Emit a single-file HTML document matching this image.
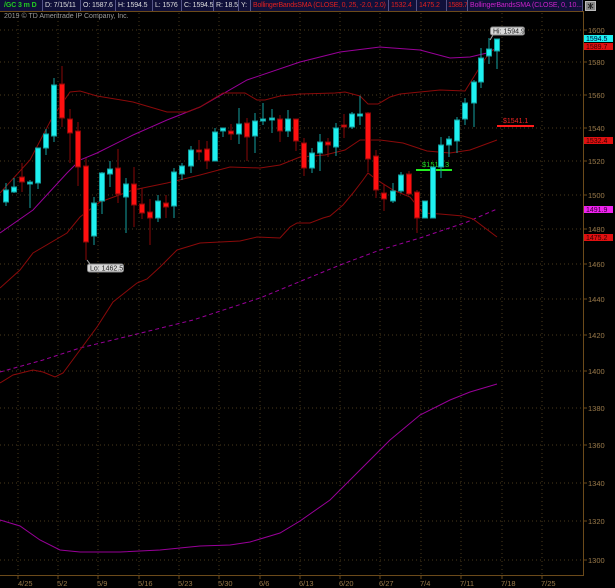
<!DOCTYPE html>
<html><head><meta charset="utf-8"><style>
html,body{margin:0;padding:0;background:#000;}
body{width:615px;height:588px;overflow:hidden;position:relative;font-family:"Liberation Sans",sans-serif;}
svg{position:absolute;left:0;top:0;}
text{font-family:"Liberation Sans",sans-serif;}
.hd{position:absolute;top:0;height:11px;font-size:7px;line-height:11px;color:#ddd;white-space:nowrap;overflow:hidden;border-right:1px solid #555588;background:#10103a;box-sizing:border-box;padding-left:2px;letter-spacing:-0.1px;}
</style></head><body>
<svg width="615" height="588" viewBox="0 0 615 588">
<g stroke="#4a3a1c" stroke-width="1" stroke-dasharray="1,3">
<line x1="0" x2="583" y1="30" y2="30"/><line x1="0" x2="583" y1="62" y2="62"/><line x1="0" x2="583" y1="95" y2="95"/><line x1="0" x2="583" y1="128" y2="128"/><line x1="0" x2="583" y1="161" y2="161"/><line x1="0" x2="583" y1="195" y2="195"/><line x1="0" x2="583" y1="229" y2="229"/><line x1="0" x2="583" y1="264" y2="264"/><line x1="0" x2="583" y1="299" y2="299"/><line x1="0" x2="583" y1="335" y2="335"/><line x1="0" x2="583" y1="371" y2="371"/><line x1="0" x2="583" y1="408" y2="408"/><line x1="0" x2="583" y1="445" y2="445"/><line x1="0" x2="583" y1="483" y2="483"/><line x1="0" x2="583" y1="521" y2="521"/><line x1="0" x2="583" y1="560" y2="560"/>
<line x1="18" x2="18" y1="13" y2="575"/><line x1="58" x2="58" y1="13" y2="575"/><line x1="98" x2="98" y1="13" y2="575"/><line x1="139" x2="139" y1="13" y2="575"/><line x1="179" x2="179" y1="13" y2="575"/><line x1="219" x2="219" y1="13" y2="575"/><line x1="260" x2="260" y1="13" y2="575"/><line x1="300" x2="300" y1="13" y2="575"/><line x1="340" x2="340" y1="13" y2="575"/><line x1="380" x2="380" y1="13" y2="575"/><line x1="421" x2="421" y1="13" y2="575"/><line x1="461" x2="461" y1="13" y2="575"/><line x1="502" x2="502" y1="13" y2="575"/><line x1="542" x2="542" y1="13" y2="575"/>
</g>
<path d="M0 11.5H583.5V575.5H0" fill="none" stroke="#6b4a1a" stroke-width="1"/>
<g stroke="#6b4a1a"><line x1="18" x2="18" y1="575" y2="579"/><line x1="58" x2="58" y1="575" y2="579"/><line x1="98" x2="98" y1="575" y2="579"/><line x1="139" x2="139" y1="575" y2="579"/><line x1="179" x2="179" y1="575" y2="579"/><line x1="219" x2="219" y1="575" y2="579"/><line x1="260" x2="260" y1="575" y2="579"/><line x1="300" x2="300" y1="575" y2="579"/><line x1="340" x2="340" y1="575" y2="579"/><line x1="380" x2="380" y1="575" y2="579"/><line x1="421" x2="421" y1="575" y2="579"/><line x1="461" x2="461" y1="575" y2="579"/><line x1="502" x2="502" y1="575" y2="579"/><line x1="542" x2="542" y1="575" y2="579"/>
<line x1="583" x2="587" y1="30" y2="30"/><line x1="583" x2="587" y1="62" y2="62"/><line x1="583" x2="587" y1="95" y2="95"/><line x1="583" x2="587" y1="128" y2="128"/><line x1="583" x2="587" y1="161" y2="161"/><line x1="583" x2="587" y1="195" y2="195"/><line x1="583" x2="587" y1="229" y2="229"/><line x1="583" x2="587" y1="264" y2="264"/><line x1="583" x2="587" y1="299" y2="299"/><line x1="583" x2="587" y1="335" y2="335"/><line x1="583" x2="587" y1="371" y2="371"/><line x1="583" x2="587" y1="408" y2="408"/><line x1="583" x2="587" y1="445" y2="445"/><line x1="583" x2="587" y1="483" y2="483"/><line x1="583" x2="587" y1="521" y2="521"/><line x1="583" x2="587" y1="560" y2="560"/></g>
<g fill="#9a7a4a" font-size="7.5">
<text x="588" y="33">1600</text><text x="588" y="65">1580</text><text x="588" y="98">1560</text><text x="588" y="131">1540</text><text x="588" y="164">1520</text><text x="588" y="198">1500</text><text x="588" y="232">1480</text><text x="588" y="267">1460</text><text x="588" y="302">1440</text><text x="588" y="338">1420</text><text x="588" y="374">1400</text><text x="588" y="411">1380</text><text x="588" y="448">1360</text><text x="588" y="486">1340</text><text x="588" y="524">1320</text><text x="588" y="563">1300</text>
<text x="18" y="586">4/25</text><text x="57" y="586">5/2</text><text x="97" y="586">5/9</text><text x="138" y="586">5/16</text><text x="178" y="586">5/23</text><text x="218" y="586">5/30</text><text x="259" y="586">6/6</text><text x="299" y="586">6/13</text><text x="339" y="586">6/20</text><text x="379" y="586">6/27</text><text x="420" y="586">7/4</text><text x="460" y="586">7/11</text><text x="501" y="586">7/18</text><text x="541" y="586">7/25</text>
</g>
<text x="4" y="18" font-size="7" fill="#9a9a9a">2019 © TD Ameritrade IP Company, Inc.</text>
<g fill="none" stroke-width="1">
<polyline stroke="#990099" points="0,233 33,210 67,173 80,160 97,153 133,135 167,120 200,107 247,80 300,62 340,52 380,47 420,50 450,58 470,57 487,53 497,48"/>
<polyline stroke="#990099" points="0,520 20,526 40,540 60,550 80,552 120,552 160,550 200,546 230,545 250,542 280,533 300,521 330,500 360,470 390,440 420,415 450,400 470,392 497,384"/>
<polyline stroke="#990099" stroke-dasharray="4,3" points="0,372 43,360 80,348 133,335 193,320 260,298 340,265 380,250 420,238 467,222 497,209"/>
<polyline stroke="#8b0a0a" points="0,193 30,160 52,118 70,92 80,91 97,96 133,102 167,112 187,112 200,107 223,93 245,93 257,100 265,100 280,96 300,94 335,93 345,92 360,96 368,104 378,104 390,97 400,94 420,92 440,90 465,91 475,75 483,62 490,52 497,48"/>
<polyline stroke="#8b0a0a" points="0,288 20,270 33,253 67,233 80,217 100,202 133,190 167,183 200,175 230,167 260,168 280,165 300,157 325,155 345,150 360,140 380,140 403,143 427,151 450,153 470,150 497,140"/>
<polyline stroke="#8b0a0a" points="0,383 13,375 33,370 43,372 55,377 63,373 80,350 97,327 113,302 137,283 147,279 160,267 177,250 200,243 240,241 257,237 280,238 290,227 297,223 310,223 323,218 330,216 343,205 353,193 363,180 368,173 377,180 393,190 410,197 423,213 440,214 463,216 473,219 497,237"/>
</g>
<line x1="497" x2="534" y1="126" y2="126" stroke="#ff1a1a" stroke-width="2"/>
<text x="503" y="123" font-size="7" fill="#ee2222">$1541.1</text>
<text x="422" y="167" font-size="7.5" fill="#22dd22">$1515.3</text>
<line x1="416" x2="452" y1="170" y2="170" stroke="#22ee22" stroke-width="2"/>
<g stroke-width="1">
<g stroke="#13a0a0" fill="#1ef0f0">
<line x1="6" x2="6" y1="183" y2="206"/><rect x="3.5" y="190" width="5" height="12"/>
<line x1="14" x2="14" y1="178" y2="193"/><rect x="11.5" y="187" width="5" height="5"/>
<line x1="30" x2="30" y1="180" y2="208"/><rect x="27.5" y="182" width="5" height="2"/>
<line x1="38" x2="38" y1="148" y2="189"/><rect x="35.5" y="148" width="5" height="35"/>
<line x1="46" x2="46" y1="129" y2="155"/><rect x="43.5" y="134" width="5" height="14"/>
<line x1="54" x2="54" y1="78" y2="142"/><rect x="51.5" y="85" width="5" height="51"/>
<line x1="94" x2="94" y1="197" y2="245"/><rect x="91.5" y="203" width="5" height="33"/>
<line x1="102" x2="102" y1="172" y2="214"/><rect x="99.5" y="173" width="5" height="28"/>
<line x1="110" x2="110" y1="161" y2="187"/><rect x="107.5" y="169" width="5" height="5"/>
<line x1="126" x2="126" y1="178" y2="233"/><rect x="123.5" y="184" width="5" height="13"/>
<line x1="158" x2="158" y1="195" y2="222"/><rect x="155.5" y="201" width="5" height="17"/>
<line x1="174" x2="174" y1="168" y2="218"/><rect x="171.5" y="172" width="5" height="34"/>
<line x1="182" x2="182" y1="163" y2="180"/><rect x="179.5" y="166" width="5" height="8"/>
<line x1="191" x2="191" y1="146" y2="173"/><rect x="188.5" y="150" width="5" height="16"/>
<line x1="215" x2="215" y1="128" y2="161"/><rect x="212.5" y="132" width="5" height="29"/>
<line x1="223" x2="223" y1="128" y2="137"/><rect x="220.5" y="128" width="5" height="3"/>
<line x1="239" x2="239" y1="108" y2="144"/><rect x="236.5" y="124" width="5" height="10"/>
<line x1="255" x2="255" y1="113" y2="153"/><rect x="252.5" y="121" width="5" height="15"/>
<line x1="263" x2="263" y1="103" y2="125"/><rect x="260.5" y="119" width="5" height="2"/>
<line x1="272" x2="272" y1="109" y2="133"/><rect x="269.5" y="118" width="5" height="2"/>
<line x1="288" x2="288" y1="110" y2="137"/><rect x="285.5" y="119" width="5" height="12"/>
<line x1="312" x2="312" y1="148" y2="173"/><rect x="309.5" y="153" width="5" height="15"/>
<line x1="320" x2="320" y1="134" y2="171"/><rect x="317.5" y="142" width="5" height="11"/>
<line x1="336" x2="336" y1="123" y2="156"/><rect x="333.5" y="128" width="5" height="19"/>
<line x1="352" x2="352" y1="112" y2="129"/><rect x="349.5" y="114" width="5" height="13"/>
<line x1="360" x2="360" y1="96" y2="125"/><rect x="357.5" y="114" width="5" height="2"/>
<line x1="393" x2="393" y1="183" y2="203"/><rect x="390.5" y="191" width="5" height="10"/>
<line x1="401" x2="401" y1="172" y2="193"/><rect x="398.5" y="175" width="5" height="16"/>
<rect x="422.5" y="201" width="5" height="17"/>
<rect x="430.5" y="167" width="5" height="51"/>
<line x1="441" x2="441" y1="137" y2="178"/><rect x="438.5" y="145" width="5" height="22"/>
<line x1="449" x2="449" y1="136" y2="157"/><rect x="446.5" y="139" width="5" height="6"/>
<line x1="457" x2="457" y1="117" y2="153"/><rect x="454.5" y="120" width="5" height="21"/>
<line x1="465" x2="465" y1="98" y2="125"/><rect x="462.5" y="103" width="5" height="16"/>
<line x1="474" x2="474" y1="80" y2="127"/><rect x="471.5" y="82" width="5" height="21"/>
<line x1="481" x2="481" y1="48" y2="88"/><rect x="478.5" y="58" width="5" height="24"/>
<line x1="489" x2="489" y1="38" y2="64"/><rect x="486.5" y="49" width="5" height="7"/>
<line x1="497" x2="497" y1="39" y2="69"/><rect x="494.5" y="39" width="5" height="12"/>
</g>
<g stroke="#8a0808" fill="#ff1010">
<line x1="22" x2="22" y1="163" y2="192"/><rect x="19.5" y="177" width="5" height="5"/>
<line x1="62" x2="62" y1="66" y2="127"/><rect x="59.5" y="84" width="5" height="34"/>
<line x1="70" x2="70" y1="109" y2="163"/><rect x="67.5" y="119" width="5" height="14"/>
<line x1="78" x2="78" y1="122" y2="186"/><rect x="75.5" y="131" width="5" height="36"/>
<line x1="86" x2="86" y1="158" y2="260"/><rect x="83.5" y="166" width="5" height="76"/>
<line x1="118" x2="118" y1="149" y2="203"/><rect x="115.5" y="168" width="5" height="26"/>
<line x1="134" x2="134" y1="167" y2="227"/><rect x="131.5" y="184" width="5" height="21"/>
<line x1="142" x2="142" y1="188" y2="219"/><rect x="139.5" y="204" width="5" height="9"/>
<line x1="150" x2="150" y1="199" y2="245"/><rect x="147.5" y="212" width="5" height="6"/>
<line x1="166" x2="166" y1="195" y2="218"/><rect x="163.5" y="203" width="5" height="4"/>
<line x1="199" x2="199" y1="140" y2="160"/><rect x="196.5" y="150" width="5" height="2"/>
<line x1="207" x2="207" y1="141" y2="169"/><rect x="204.5" y="149" width="5" height="12"/>
<line x1="231" x2="231" y1="124" y2="140"/><rect x="228.5" y="131" width="5" height="3"/>
<line x1="247" x2="247" y1="118" y2="161"/><rect x="244.5" y="123" width="5" height="14"/>
<line x1="280" x2="280" y1="115" y2="142"/><rect x="277.5" y="119" width="5" height="12"/>
<line x1="296" x2="296" y1="119" y2="151"/><rect x="293.5" y="119" width="5" height="22"/>
<line x1="304" x2="304" y1="138" y2="176"/><rect x="301.5" y="143" width="5" height="25"/>
<line x1="328" x2="328" y1="138" y2="157"/><rect x="325.5" y="142" width="5" height="3"/>
<line x1="344" x2="344" y1="114" y2="138"/><rect x="341.5" y="125" width="5" height="2"/>
<line x1="368" x2="368" y1="112" y2="172"/><rect x="365.5" y="113" width="5" height="46"/>
<line x1="376" x2="376" y1="150" y2="198"/><rect x="373.5" y="156" width="5" height="34"/>
<line x1="384" x2="384" y1="184" y2="211"/><rect x="381.5" y="193" width="5" height="6"/>
<line x1="409" x2="409" y1="171" y2="195"/><rect x="406.5" y="174" width="5" height="20"/>
<line x1="417" x2="417" y1="190" y2="233"/><rect x="414.5" y="192" width="5" height="26"/>
</g>
</g>
<line x1="87" y1="260" x2="90" y2="264" stroke="#aaa"/>
<rect x="87.5" y="264" width="36" height="8" rx="2" fill="#d8d8d8" stroke="#888"/>
<text x="90" y="270.5" font-size="7" fill="#222">Lo: 1462.5</text>
<line x1="493" y1="35" x2="490" y2="40" stroke="#aaa"/>
<rect x="490.5" y="27" width="34" height="8" rx="2" fill="#d8d8d8" stroke="#888"/>
<text x="493" y="33.5" font-size="7" fill="#222">Hi: 1594.9</text>
<rect x="584" y="35" width="29" height="7" fill="#1ef0f0"/><text x="586" y="41" font-size="7" fill="#003">1594.5</text>
<rect x="584" y="43" width="29" height="7" fill="#e01010"/><text x="586" y="49" font-size="7" fill="#300">1589.7</text>
<rect x="584" y="137" width="29" height="7" fill="#e01010"/><text x="586" y="143" font-size="7" fill="#300">1532.4</text>
<rect x="584" y="206" width="29" height="7" fill="#ee22ee"/><text x="586" y="212" font-size="7" fill="#303">1491.9</text>
<rect x="584" y="234" width="29" height="7" fill="#e01010"/><text x="586" y="240" font-size="7" fill="#300">1475.2</text>
<rect x="585.5" y="1.5" width="10" height="9" fill="#888" stroke="#bbb"/>
<path d="M588 4 L593 8 M593 4 L588 8 M590.5 3 V9" stroke="#222" stroke-width="1"/>
</svg>
<div class="hd" style="left:0;width:43px;color:#22cc22;font-weight:bold;padding-left:4px;">/GC 3 m D</div>
<div class="hd" style="left:43px;width:38px;">D: 7/15/11</div>
<div class="hd" style="left:81px;width:35px;">O: 1587.6</div>
<div class="hd" style="left:116px;width:37px;">H: 1594.5</div>
<div class="hd" style="left:153px;width:29px;">L: 1576</div>
<div class="hd" style="left:182px;width:32px;">C: 1594.5</div>
<div class="hd" style="left:214px;width:25px;">R: 18.5</div>
<div class="hd" style="left:239px;width:12px;">Y:</div>
<div class="hd" style="left:251px;width:138px;color:#e02020;letter-spacing:-0.2px;">BollingerBandsSMA (CLOSE, 0, 25, -2.0, 2.0)</div>
<div class="hd" style="left:389px;width:28px;color:#e02020;">1532.4</div>
<div class="hd" style="left:417px;width:30px;color:#e02020;">1475.2</div>
<div class="hd" style="left:447px;width:21px;color:#e02020;letter-spacing:-0.3px;padding-left:1px;">1589.7</div>
<div class="hd" style="left:468px;width:115px;color:#cc22cc;">BollingerBandsSMA (CLOSE, 0, 10...</div>
</body></html>
